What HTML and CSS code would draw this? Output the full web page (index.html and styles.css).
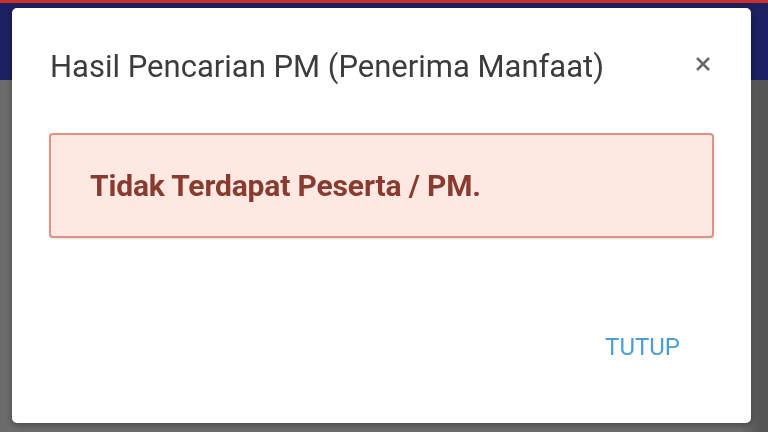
FILE: index.html
```html
<!DOCTYPE html>
<html lang="id">
<head>
<meta charset="utf-8">
<title>Hasil Pencarian PM</title>
<link rel="stylesheet" href="styles.css">
</head>
<body>
<div class="backdrop">
  <div class="topbar"><div class="stripe"></div></div>
  <div class="page"></div>
</div>
<div class="dialog" role="dialog">
  <div class="dialog-header">
    <h1 class="dialog-title">Hasil Pencarian PM (Penerima Manfaat)</h1>
    <button class="close" aria-label="Tutup">
      <svg width="16" height="16" viewBox="0 0 16 16"><path d="M2 2 L14 14 M14 2 L2 14" stroke="#6a6a6a" stroke-width="2.6" stroke-linecap="butt" fill="none"/></svg>
    </button>
  </div>
  <div class="dialog-body">
    <div class="alert">Tidak Terdapat Peserta / PM.</div>
  </div>
  <div class="dialog-footer">
    <button class="btn-text">TUTUP</button>
  </div>
</div>
</body>
</html>
```
FILE: styles.css
```css
html, body {
  margin: 0;
  padding: 0;
  width: 768px;
  height: 432px;
  overflow: hidden;
  font-family: Roboto, "Liberation Sans", sans-serif;
}
.backdrop {
  display: flex;
  flex-direction: column;
  height: 432px;
}
.topbar {
  height: 80px;
  background: #1d2163;
}
.stripe {
  height: 3px;
  background: #c8302a;
}
.page {
  flex: 1;
  background: linear-gradient(to right, #6c6c6c 0, #6c6c6c 740px, #555 760px);
}
.dialog {
  position: fixed;
  left: 12px;
  top: 8px;
  width: 739px;
  height: 415px;
  background: #fff;
  border-radius: 5px;
  box-shadow: 0 2px 6px rgba(0,0,0,0.35);
  display: flex;
  flex-direction: column;
  box-sizing: border-box;
}
.dialog-header {
  display: flex;
  align-items: center;
  justify-content: space-between;
  padding: 40px 38px 0 38px;
  height: 37px;
}
.dialog-title {
  margin: 0;
  font-size: 31px;
  line-height: 37px;
  font-weight: 400;
  color: #3c3c3c;
}
.close {
  background: none;
  border: 0;
  padding: 0;
  margin: 0 2px 5px 0;
  display: flex;
}
.dialog-body {
  padding: 48px 37px 0 37px;
}
.alert {
  height: 105px;
  box-sizing: border-box;
  border: 2px solid #dd9283;
  background: #fde8e2;
  border-radius: 4px;
  box-shadow: 0 1px 2px rgba(0,0,0,0.12);
  display: flex;
  align-items: center;
  padding: 0 0 0 39px;
  font-size: 30px;
  letter-spacing: -0.15px;
  font-weight: 700;
  color: #8a3b30;
}
.dialog-footer {
  display: flex;
  justify-content: flex-end;
  padding: 95px 71px 0 0;
}
.btn-text {
  background: none;
  border: 0;
  padding: 0;
  font-family: Roboto, "Liberation Sans", sans-serif;
  font-size: 24px;
  line-height: 28px;
  font-weight: 400;
  color: #4a9fd6;
}
```
